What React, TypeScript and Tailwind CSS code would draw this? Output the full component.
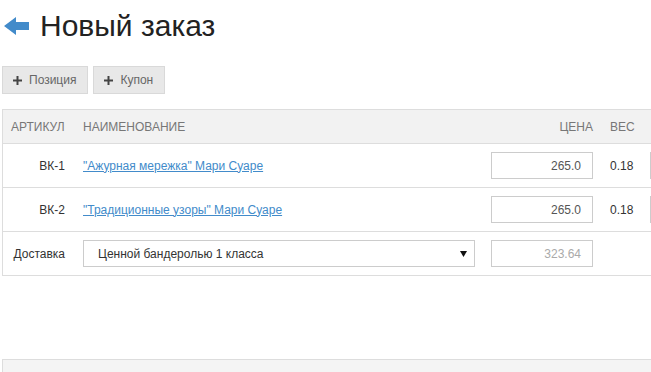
import React from "react";

const items = [
  { sku: "ВК-1", name: "\"Ажурная мережка\" Мари Суаре", price: "265.0", weight: "0.18" },
  { sku: "ВК-2", name: "\"Традиционные узоры\" Мари Суаре", price: "265.0", weight: "0.18" },
];

function Plus() {
  return (
    <svg width="9" height="9" viewBox="0 0 9 9" className="mr-[7px] shrink-0">
      <rect x="0" y="3.5" width="9" height="2" fill="#444" />
      <rect x="3.5" y="0" width="2" height="9" fill="#444" />
    </svg>
  );
}

export default function App() {
  return (
    <div className="w-[651px] h-[372px] overflow-hidden bg-white text-[#333] font-['Liberation_Sans',Arial,sans-serif]">
      <div className="flex items-center pt-[9px]">
        <svg width="25" height="18" viewBox="0 0 25 18" className="ml-[4px] mr-[11px] shrink-0">
          <polygon points="0,9 12,0 12,5 25,5 25,13 12,13 12,18" fill="#428bca" />
        </svg>
        <h1 className="text-[30px] leading-[33px] text-[#222] font-normal">Новый заказ</h1>
      </div>

      <div className="flex gap-[5px] ml-[2px] mt-[24px]">
        <button className="flex items-center h-[28px] pl-[10px] pr-[11px] border border-[#d9d9d9] bg-[#e8e8e8] text-[12px] text-[#666]">
          <Plus />
          Позиция
        </button>
        <button className="flex items-center h-[28px] pl-[10px] pr-[11px] border border-[#d9d9d9] bg-[#e8e8e8] text-[12px] text-[#666]">
          <Plus />
          Купон
        </button>
      </div>

      <div className="w-[760px] ml-[2px] mt-[15px] border-t border-l border-[#dddddd] text-[12px]">
        <div className="flex items-center h-[34px] bg-[#f2f2f2] border-b border-[#dddddd] text-[#777] uppercase">
          <div className="w-[72px] pl-[8px]">Артикул</div>
          <div className="w-[408px] pl-[8px]">Наименование</div>
          <div className="w-[118px] pr-[8px] text-right">Цена</div>
          <div className="w-[41px] pl-[9px]">Вес</div>
        </div>

        {items.map((item) => (
          <div key={item.sku} className="flex items-center h-[44px] border-b border-[#dddddd]">
            <div className="w-[72px] pr-[10px] text-right">{item.sku}</div>
            <div className="w-[408px] pl-[8px]">
              <a href="#" className="text-[#428bca] underline">{item.name}</a>
            </div>
            <div className="w-[118px] px-[8px]">
              <div className="h-[27px] border border-[#cccccc] flex items-center justify-end pr-[11px] text-[#555]">
                {item.price}
              </div>
            </div>
            <div className="w-[41px] pl-[9px]">{item.weight}</div>
            <div className="w-[100px] pl-[8px]">
              <div className="h-[27px] border border-[#cccccc]" />
            </div>
          </div>
        ))}

        <div className="flex items-center h-[44px] border-b border-[#dddddd]">
          <div className="w-[72px] pr-[10px] text-right">Доставка</div>
          <div className="w-[408px] px-[8px]">
            <div className="h-[27px] border border-[#cccccc] flex items-center justify-between pl-[14px] pr-[7px]">
              <span>Ценной бандеролью 1 класса</span>
              <svg width="7" height="6" viewBox="0 0 7 6">
                <polygon points="0,0 7,0 3.5,6" fill="#111" />
              </svg>
            </div>
          </div>
          <div className="w-[118px] px-[8px]">
            <div className="h-[27px] border border-[#cccccc] flex items-center justify-end pr-[11px] text-[#aaa]">
              323.64
            </div>
          </div>
        </div>
      </div>

      <div className="w-[760px] h-[40px] ml-[2px] mt-[83px] bg-[#f4f4f4] border-t border-l border-[#dddddd]" />
    </div>
  );
}
